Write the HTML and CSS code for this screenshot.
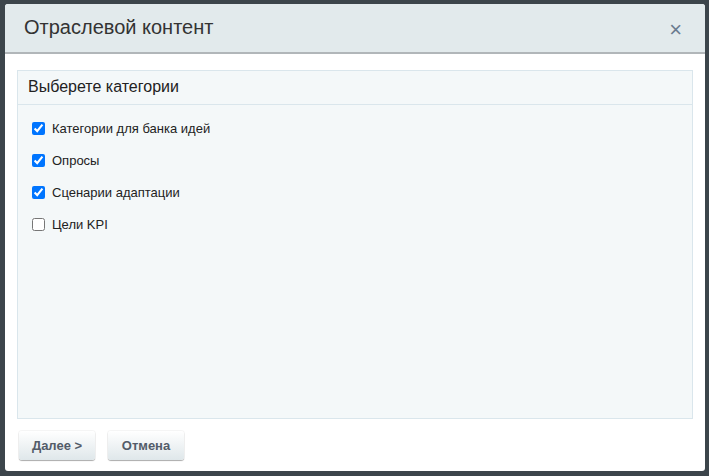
FILE: index.html
```html
<!DOCTYPE html>
<html>
<head>
<meta charset="utf-8">
<link rel="stylesheet" href="styles.css">
</head>
<body>

<div class="dialog">
  <div class="dialog-head">
    <span class="dialog-title">Отраслевой контент</span>
    <span class="dialog-close">&times;</span>
  </div>

  <div class="dialog-body">
    <div class="panel">
      <div class="panel-title">Выберете категории</div>
      <div class="panel-list">
        <label class="row"><input type="checkbox" checked> Категории для банка идей</label>
        <label class="row"><input type="checkbox" checked> Опросы</label>
        <label class="row"><input type="checkbox" checked> Сценарии адаптации</label>
        <label class="row"><input type="checkbox"> Цели KPI</label>
      </div>
    </div>
  </div>

  <div class="dialog-buttons">
    <button class="btn">Далее &gt;</button>
    <button class="btn">Отмена</button>
  </div>
</div>

</body>
</html>
```

FILE: styles.css
```css
body {
  margin: 0;
  font-family: "Liberation Sans", Arial, sans-serif;
  background-color: #3c454b;
  width: 709px;
  height: 476px;
  overflow: hidden;
}

.dialog {
  margin: 4px 0 0 5px;
  width: 700px;
  height: 467px;
  background-color: #fff;
  border-radius: 3px;
  display: flex;
  flex-direction: column;
  overflow: hidden;
}

.dialog-head {
  height: 48px;
  flex: 0 0 48px;
  background-color: #e2eaec;
  border-bottom: 2px solid #b1b6b9;
  display: flex;
  align-items: center;
  justify-content: space-between;
  padding: 0 23px 0 19px;
}

.dialog-title {
  font-size: 20px;
  color: #333;
  margin-top: -1px;
}

.dialog-close {
  font-size: 22px;
  color: #6b7b8f;
  line-height: 1;
  margin-top: 3px;
}

.dialog-body {
  padding: 16px 12px 0 12px;
}

.panel {
  height: 347px;
  background-color: #f4f8f9;
  border: 1px solid #dae6ec;
}

.panel-title {
  height: 33px;
  border-bottom: 1px solid #dae6ec;
  font-size: 16px;
  color: #222;
  line-height: 32px;
  padding-left: 10px;
}

.panel-list {
  padding: 7px 0 0 14px;
}

.row {
  display: flex;
  align-items: center;
  height: 32px;
  font-size: 13px;
  color: #222;
}

.row input {
  margin: 0 7px 0 0;
  width: 13px;
  height: 13px;
}

.dialog-buttons {
  padding: 12px 14px 0 14px;
  display: flex;
  gap: 13px;
}

.btn {
  height: 29px;
  width: 76px;
  border: none;
  border-radius: 3px;
  background: linear-gradient(#ffffff, #dfe7ea);
  box-shadow: 0 1px 1px rgba(0, 0, 0, 0.3), 0 0 0 1px rgba(0, 0, 0, 0.04);
  font-family: "Liberation Sans", Arial, sans-serif;
  font-size: 13px;
  font-weight: bold;
  color: #535c69;
  cursor: pointer;
}
```
